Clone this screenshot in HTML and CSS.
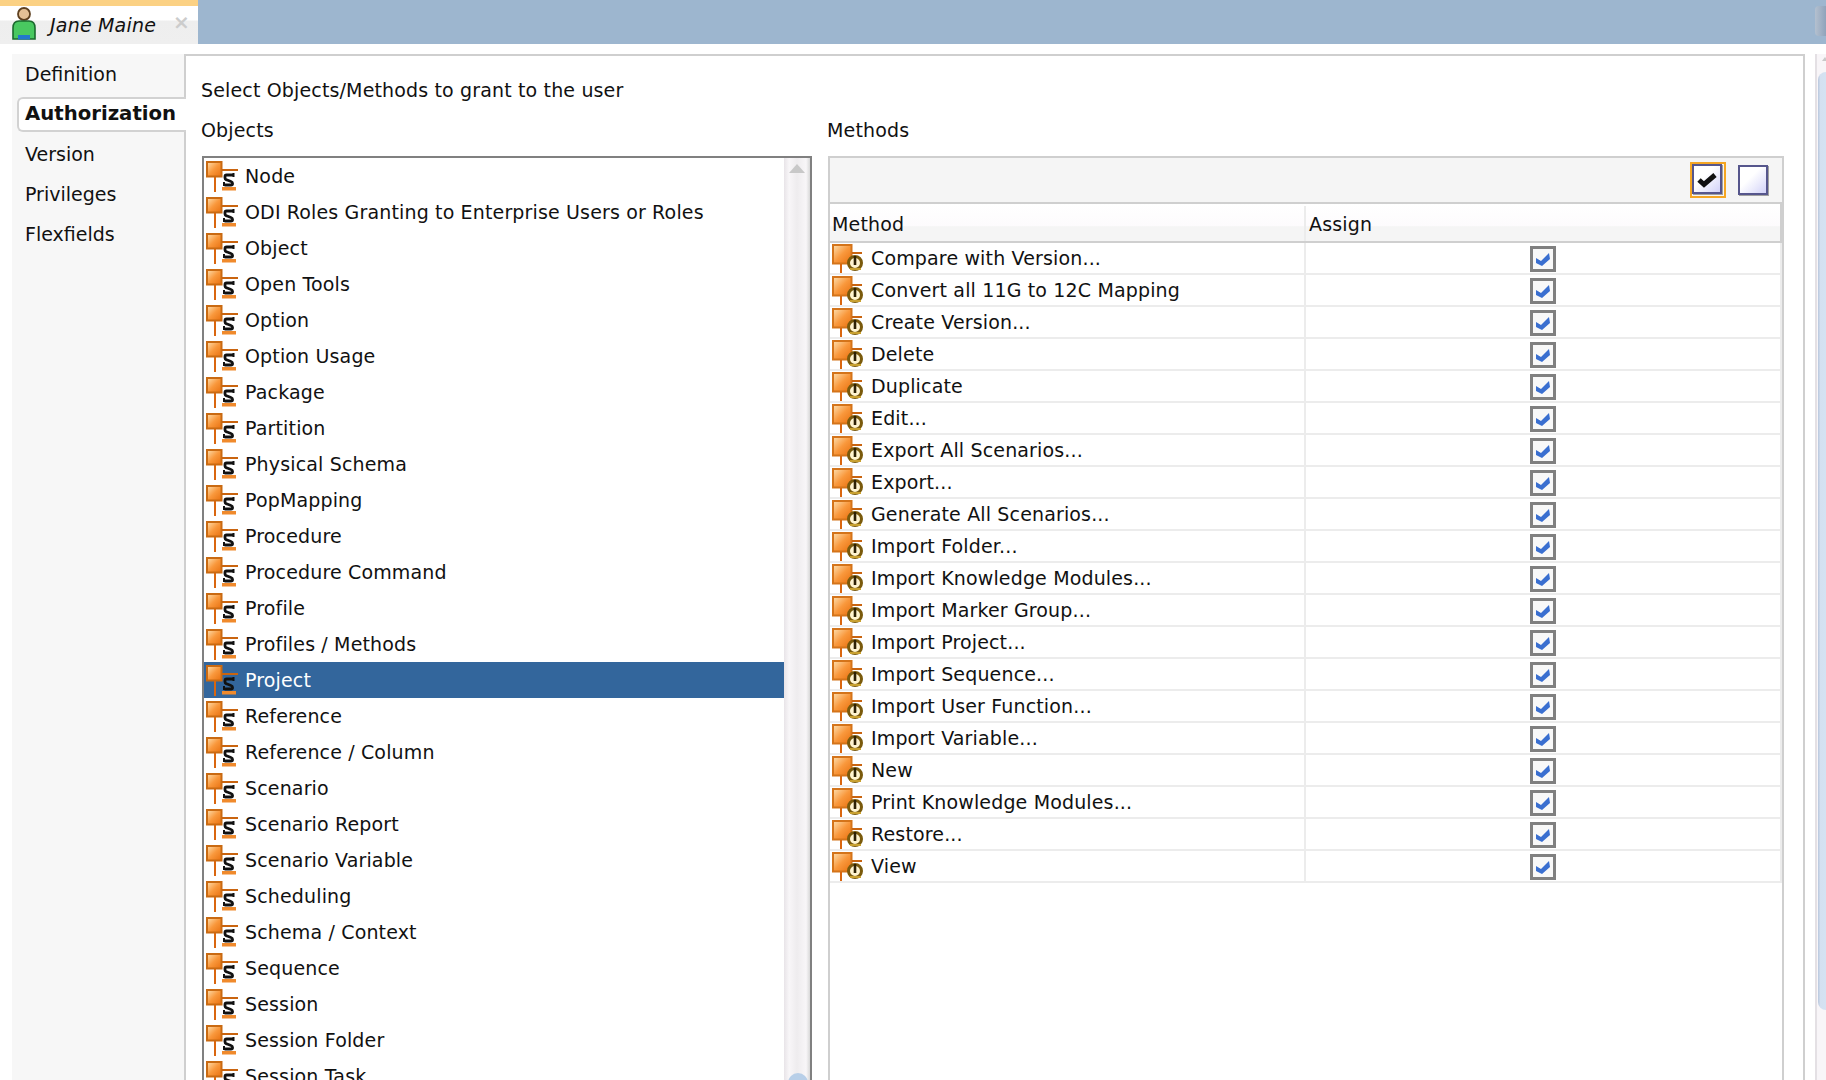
FILE: index.html
```html
<!DOCTYPE html>
<html lang="en">
<head>
<meta charset="utf-8">
<title>Jane Maine - Authorization</title>
<link rel="stylesheet" href="styles.css">
</head>
<body>
<svg class="defs" width="0" height="0" aria-hidden="true">
  <defs>
    <linearGradient id="sq" x1="0" y1="0" x2="1" y2="1">
      <stop offset="0" stop-color="#fde0b0"/>
      <stop offset="0.5" stop-color="#f9983c"/>
      <stop offset="1" stop-color="#e8700f"/>
    </linearGradient>
    <symbol id="obj" viewBox="0 0 34 32">
      <rect x="1" y="2" width="14.500" height="14.500" fill="url(#sq)" stroke="#c96a12" stroke-width="2"/>
      <rect x="8" y="17" width="2" height="15" fill="#d9660f"/>
      <rect x="16" y="9" width="16" height="2" fill="#c9640f"/>
      <rect x="16" y="27" width="14" height="3.500" fill="#f08a2c"/>
      <path d="M27 15h-6.500q-1.500 0-1.500 1.500v1.500q0 1.300 1.500 1.800l4.500 1.700q1.500.5 1.500 1.800v.7q0 1-1.500 1H18.500" fill="none" stroke="#111" stroke-width="2.800"/>
      <path d="M27.500 13v4M18 22v4" stroke="#111" stroke-width="2"/>
    </symbol>
    <symbol id="mth" viewBox="0 0 34 30">
      <rect x="1" y="2" width="18.500" height="18.500" fill="url(#sq)" stroke="#d4741a" stroke-width="2"/>
      <rect x="8" y="21" width="2" height="9" fill="#d9660f"/>
      <rect x="20" y="9" width="10" height="2" fill="#c9640f"/>
      <circle cx="23" cy="20" r="6.500" fill="#fff4d0" stroke="#7a5a0c" stroke-width="3"/>
      <rect x="21.700" y="13" width="2.600" height="9" fill="#2e2205"/>
      <rect x="18" y="25" width="11" height="2" fill="#c8a030"/>
    </symbol>
  </defs>
</svg>
<div class="app">
  <header class="topbar">
    <div class="tab">
      <svg class="user" viewBox="0 0 26 34" aria-hidden="true">
        <circle cx="13" cy="8" r="6" fill="#e4c096" stroke="#5e4020" stroke-width="1.800"/>
        <path d="M2 33V22q0-7 6-7h10q6 0 6 7v11z" fill="#49c860" stroke="#1b6a2e" stroke-width="1.600"/>
        <rect x="7" y="29" width="12" height="4.500" fill="#2278cc"/>
      </svg>
      <span class="tab-name">Jane Maine</span>
      <span class="tab-close">×</span>
    </div>
    <div class="corner-btn"></div>
  </header>
  <div class="body-row">
    <nav class="side">
      <div class="nav-item">Definition</div>
      <div class="nav-item nav-active">Authorization</div>
      <div class="nav-item">Version</div>
      <div class="nav-item">Privileges</div>
      <div class="nav-item">Flexfields</div>
    </nav>
    <main class="panel">
      <p class="intro">Select Objects/Methods to grant to the user</p>
      <div class="cols">
        <section class="col-objects">
          <h2 class="label">Objects</h2>
          <div class="listbox">
            <ul class="list">
              <li class="row"><svg class="ico"><use href="#obj"/></svg>Node</li>
              <li class="row"><svg class="ico"><use href="#obj"/></svg>ODI Roles Granting to Enterprise Users or Roles</li>
              <li class="row"><svg class="ico"><use href="#obj"/></svg>Object</li>
              <li class="row"><svg class="ico"><use href="#obj"/></svg>Open Tools</li>
              <li class="row"><svg class="ico"><use href="#obj"/></svg>Option</li>
              <li class="row"><svg class="ico"><use href="#obj"/></svg>Option Usage</li>
              <li class="row"><svg class="ico"><use href="#obj"/></svg>Package</li>
              <li class="row"><svg class="ico"><use href="#obj"/></svg>Partition</li>
              <li class="row"><svg class="ico"><use href="#obj"/></svg>Physical Schema</li>
              <li class="row"><svg class="ico"><use href="#obj"/></svg>PopMapping</li>
              <li class="row"><svg class="ico"><use href="#obj"/></svg>Procedure</li>
              <li class="row"><svg class="ico"><use href="#obj"/></svg>Procedure Command</li>
              <li class="row"><svg class="ico"><use href="#obj"/></svg>Profile</li>
              <li class="row"><svg class="ico"><use href="#obj"/></svg>Profiles / Methods</li>
              <li class="row row-selected"><svg class="ico"><use href="#obj"/></svg>Project</li>
              <li class="row"><svg class="ico"><use href="#obj"/></svg>Reference</li>
              <li class="row"><svg class="ico"><use href="#obj"/></svg>Reference / Column</li>
              <li class="row"><svg class="ico"><use href="#obj"/></svg>Scenario</li>
              <li class="row"><svg class="ico"><use href="#obj"/></svg>Scenario Report</li>
              <li class="row"><svg class="ico"><use href="#obj"/></svg>Scenario Variable</li>
              <li class="row"><svg class="ico"><use href="#obj"/></svg>Scheduling</li>
              <li class="row"><svg class="ico"><use href="#obj"/></svg>Schema / Context</li>
              <li class="row"><svg class="ico"><use href="#obj"/></svg>Sequence</li>
              <li class="row"><svg class="ico"><use href="#obj"/></svg>Session</li>
              <li class="row"><svg class="ico"><use href="#obj"/></svg>Session Folder</li>
              <li class="row"><svg class="ico"><use href="#obj"/></svg>Session Task</li>
            </ul>
            <div class="vscroll">
              <div class="arrow"></div>
              <div class="thumb-end"></div>
            </div>
          </div>
        </section>
        <section class="col-methods">
          <h2 class="label">Methods</h2>
          <div class="methods">
            <div class="toolbar">
              <span class="tool tool-on"><span class="toolbox"><svg viewBox="0 0 24 24" class="tool-check"><path d="M4 13l5 4.500L20 8" fill="none" stroke="#111" stroke-width="5"/></svg></span></span>
              <span class="toolbox"></span>
            </div>
            <div class="thead">
              <div class="cell-method">Method</div>
              <div class="cell-assign">Assign</div>
            </div>
            <div class="trow"><div class="cell-method"><svg class="ico-m"><use href="#mth"/></svg>Compare with Version...</div><div class="cell-check"><span class="check"></span></div></div>
            <div class="trow"><div class="cell-method"><svg class="ico-m"><use href="#mth"/></svg>Convert all 11G to 12C Mapping</div><div class="cell-check"><span class="check"></span></div></div>
            <div class="trow"><div class="cell-method"><svg class="ico-m"><use href="#mth"/></svg>Create Version...</div><div class="cell-check"><span class="check"></span></div></div>
            <div class="trow"><div class="cell-method"><svg class="ico-m"><use href="#mth"/></svg>Delete</div><div class="cell-check"><span class="check"></span></div></div>
            <div class="trow"><div class="cell-method"><svg class="ico-m"><use href="#mth"/></svg>Duplicate</div><div class="cell-check"><span class="check"></span></div></div>
            <div class="trow"><div class="cell-method"><svg class="ico-m"><use href="#mth"/></svg>Edit...</div><div class="cell-check"><span class="check"></span></div></div>
            <div class="trow"><div class="cell-method"><svg class="ico-m"><use href="#mth"/></svg>Export All Scenarios...</div><div class="cell-check"><span class="check"></span></div></div>
            <div class="trow"><div class="cell-method"><svg class="ico-m"><use href="#mth"/></svg>Export...</div><div class="cell-check"><span class="check"></span></div></div>
            <div class="trow"><div class="cell-method"><svg class="ico-m"><use href="#mth"/></svg>Generate All Scenarios...</div><div class="cell-check"><span class="check"></span></div></div>
            <div class="trow"><div class="cell-method"><svg class="ico-m"><use href="#mth"/></svg>Import Folder...</div><div class="cell-check"><span class="check"></span></div></div>
            <div class="trow"><div class="cell-method"><svg class="ico-m"><use href="#mth"/></svg>Import Knowledge Modules...</div><div class="cell-check"><span class="check"></span></div></div>
            <div class="trow"><div class="cell-method"><svg class="ico-m"><use href="#mth"/></svg>Import Marker Group...</div><div class="cell-check"><span class="check"></span></div></div>
            <div class="trow"><div class="cell-method"><svg class="ico-m"><use href="#mth"/></svg>Import Project...</div><div class="cell-check"><span class="check"></span></div></div>
            <div class="trow"><div class="cell-method"><svg class="ico-m"><use href="#mth"/></svg>Import Sequence...</div><div class="cell-check"><span class="check"></span></div></div>
            <div class="trow"><div class="cell-method"><svg class="ico-m"><use href="#mth"/></svg>Import User Function...</div><div class="cell-check"><span class="check"></span></div></div>
            <div class="trow"><div class="cell-method"><svg class="ico-m"><use href="#mth"/></svg>Import Variable...</div><div class="cell-check"><span class="check"></span></div></div>
            <div class="trow"><div class="cell-method"><svg class="ico-m"><use href="#mth"/></svg>New</div><div class="cell-check"><span class="check"></span></div></div>
            <div class="trow"><div class="cell-method"><svg class="ico-m"><use href="#mth"/></svg>Print Knowledge Modules...</div><div class="cell-check"><span class="check"></span></div></div>
            <div class="trow"><div class="cell-method"><svg class="ico-m"><use href="#mth"/></svg>Restore...</div><div class="cell-check"><span class="check"></span></div></div>
            <div class="trow"><div class="cell-method"><svg class="ico-m"><use href="#mth"/></svg>View</div><div class="cell-check"><span class="check"></span></div></div>
          </div>
        </section>
      </div>
    </main>
    <div class="outer-scroll">
      <div class="outer-arrow"></div>
      <div class="outer-thumb"></div>
    </div>
  </div>
</div>
</body>
</html>
```
FILE: styles.css
```css
* { box-sizing: border-box; }
html, body { margin: 0; height: 100%; background: #fff; overflow: hidden; }
body { font-family: "DejaVu Sans", sans-serif; font-size: 19px; letter-spacing: .15px; color: #111; }
.defs { position: absolute; }
.app { width: 1826px; height: 1080px; display: flex; flex-direction: column; overflow: hidden; }

.topbar { flex: 0 0 44px; background: #9db6cf; display: flex; justify-content: space-between; }
.tab { width: 198px; height: 44px; border-top: 6px solid #fbd184; background: linear-gradient(#fff 0, #fff 14px, #eeeeee 15px, #efefef 100%); display: flex; align-items: center; padding-left: 11px; }
.user { width: 26px; height: 34px; flex: none; margin-top: -4px; }
.tab-name { font-style: italic; margin-left: 13px; font-size: 19px; letter-spacing: .2px; white-space: nowrap; }
.tab-close { margin-left: 17px; margin-top: -6px; color: #ccc; font-size: 20px; font-weight: bold; }
.corner-btn { width: 11px; height: 30px; margin-top: 6px; background: linear-gradient(90deg, #b4c0cf, #8fa3bb); border-radius: 4px 0 0 4px; }

.body-row { flex: 1; display: flex; padding-top: 10px; min-height: 0; }
.side { flex: none; width: 172px; margin-left: 12px; background: #f7f7f7; position: relative; z-index: 1; letter-spacing: 0; }
.nav-item { height: 40px; display: flex; align-items: center; padding-left: 13px; }
.nav-item:first-child { margin-bottom: 3px; }
.nav-active { height: 35px; margin: 0 -2px 2px 5px; padding: 0 0 2px 6px; background: #fff; font-weight: bold; font-size: 19.700px; border: 2px solid #d2d2d2; border-right: 0; border-radius: 6px 0 0 6px; }

.panel { flex: none; width: 1621px; border: 2px solid #cfcfcf; border-bottom: 0; padding: 0 0 0 15px; background: #fff; display: flex; flex-direction: column; min-height: 0; }
.intro { margin: 22px 0 0; height: 24px; line-height: 24px; white-space: nowrap; }
.cols { display: flex; margin-top: 16px; min-height: 0; flex: 1; }
.label { margin: 0; font-weight: normal; font-size: 19px; height: 24px; line-height: 24px; }
.col-objects { flex: none; width: 626px; }
.col-methods { flex: none; width: 957px; }

.listbox { margin: 14px 0 0 1px; width: 610px; height: 930px; border: 2px solid #808080; border-bottom: 0; display: flex; overflow: hidden; }
.list { list-style: none; margin: 0; padding: 0; flex: 1; min-width: 0; }
.row { height: 36px; display: flex; align-items: center; white-space: nowrap; padding-left: 2px; }
.row-selected { background: #33669c; color: #fff; }
.ico { width: 34px; height: 32px; flex: none; margin-right: 5px; }
.ico-m { width: 34px; height: 30px; flex: none; margin-right: 5px; }
.vscroll { flex: 0 0 26px; height: 100%; background: linear-gradient(90deg, #e8e4e8, #f8f6f8 20%, #eeecee 50%, #f8f6f8 85%, #d8d8d8); position: relative; }
.arrow { position: absolute; left: 5px; top: 6px; width: 0; height: 0; border: 8px solid transparent; border-top: 0; border-bottom: 9px solid #c8c8c8; }
.thumb-end { position: absolute; left: 4px; top: 915px; width: 20px; height: 10px; background: #b8cfe8; border-radius: 10px 10px 0 0; }

.methods { margin: 14px 0 0 1px; width: 956px; height: 930px; border: 2px solid #cfcfcf; border-bottom: 0; overflow: hidden; }
.toolbar { height: 44px; background: #f5f5f5; display: flex; justify-content: flex-end; align-items: center; gap: 12px; padding-right: 14px; border-bottom: 2px solid #cfcfcf; box-sizing: content-box; }
.tool { width: 36px; height: 36px; display: flex; align-items: flex-start; justify-content: flex-start; border: 2px solid #f5a623; }
.toolbox { flex: none; width: 30px; height: 30px; border: 2px solid #56568c; background: linear-gradient(135deg, #fff 40%, #d2d2f8); box-shadow: 1px 1px 0 #a0a0a0; display: flex; align-items: center; justify-content: center; }
.tool-check { width: 24px; height: 24px; }
.thead { display: flex; height: 39px; padding-top: 2px; background: linear-gradient(#fff 0, #fdfbfd 60%, #f5f5f5 61%); border-bottom: 2px solid #cfcfcf; border-right: 2px solid #cfcfcf; }
.thead .cell-method { padding-left: 2px; display: flex; align-items: center; }
.cell-method { flex: 0 0 476px; border-right: 2px solid #ececec; white-space: nowrap; }
.cell-assign { display: flex; align-items: center; padding-left: 3px; }
.trow { display: flex; height: 32px; border-bottom: 2px solid #ececec; border-right: 2px solid #ececec; align-items: stretch; }
.trow .cell-method { display: flex; align-items: center; padding-left: 2px; }
.cell-check { flex: 1; display: flex; align-items: center; justify-content: center; padding-top: 2px; }
.check { width: 26px; height: 26px; border: 3px solid #808080; background: #f8f8f8; position: relative; display: block; }
.check::after { content: ""; position: absolute; inset: 0; background: #3a6fd0; clip-path: polygon(15% 45%, 40% 60%, 80% 20%, 85% 50%, 45% 85%, 15% 70%); }

.outer-scroll { flex: 1; margin-left: 10px; border-left: 2px solid #e4e0e4; background: #f8f5f8; position: relative; }
.outer-arrow { position: absolute; left: 5px; top: 3px; width: 0; height: 0; border: 3px solid transparent; border-top: 0; border-bottom: 4px solid #c8c8c8; }
.outer-thumb { margin: 18px 0 0 1px; height: 938px; background: linear-gradient(90deg, #b8c6dc 0, #d4e0f0 30%, #d4e2f2 100%); border-radius: 8px 0 0 8px; }
```
